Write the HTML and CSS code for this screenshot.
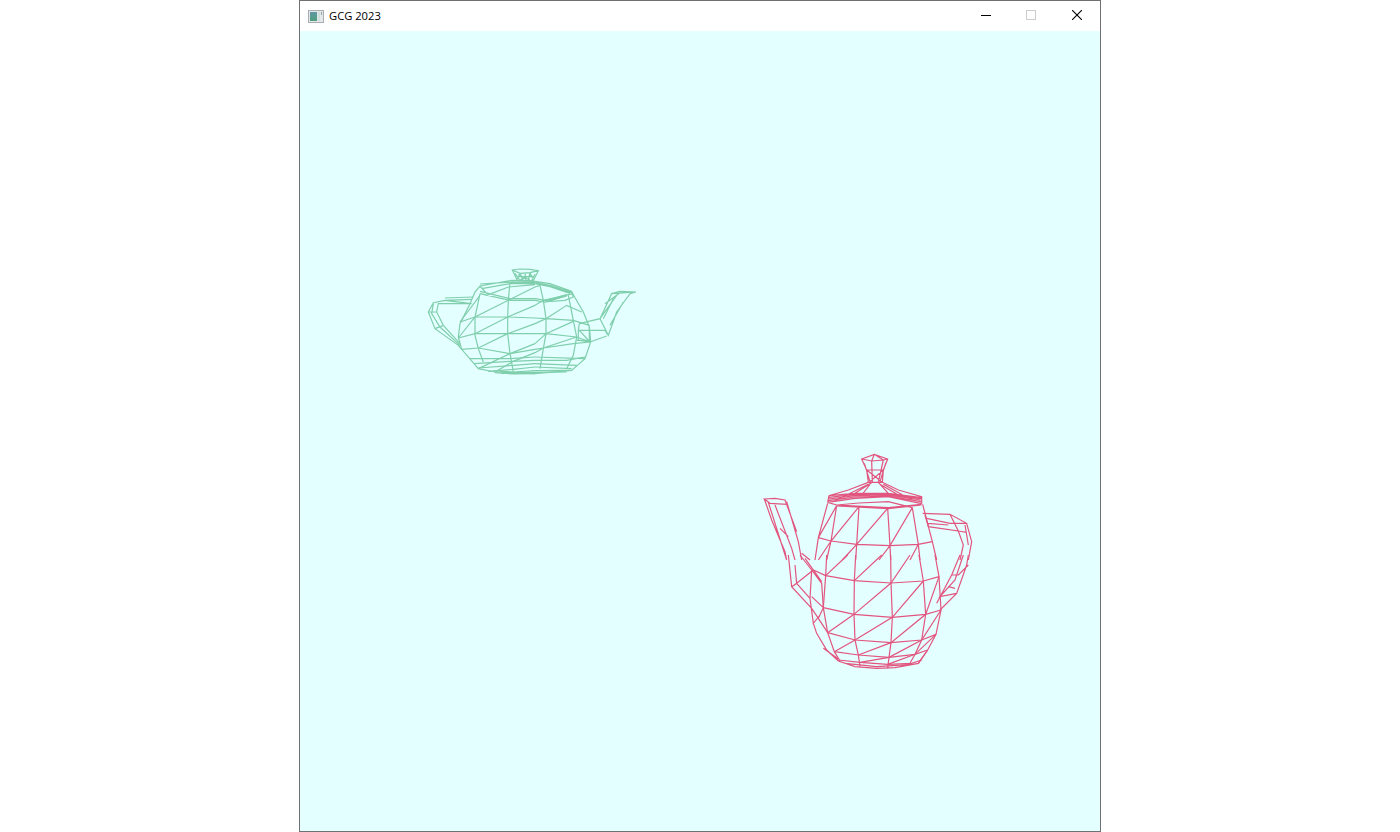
FILE: index.html
```html
<!DOCTYPE html>
<html lang="en">
<head>
    <meta charset="UTF-8">
    <title>GCG 2023</title>
    <link rel="stylesheet" href="styles.css">
</head>
<body>

    <div class="window">
        <div class="titlebar">
            <svg class="app-icon" width="16" height="13" viewBox="0 0 16 13">
                <defs>
                    <linearGradient id="iconFill" x1="0" y1="0" x2="0" y2="1">
                        <stop offset="0" stop-color="#5f97a5"/>
                        <stop offset="1" stop-color="#4f9f7c"/>
                    </linearGradient>
                </defs>
                <rect x="0.5" y="0.5" width="15" height="12" fill="#e4e8ea" stroke="#a8aeb4"/>
                <rect x="2" y="2" width="7" height="9" fill="url(#iconFill)"/>
                <rect x="10" y="2" width="2" height="9" fill="#cfe0dc"/>
                <rect x="13" y="2" width="1" height="3" fill="#8fa5a8"/>
            </svg>
            <span class="title">GCG 2023</span>
            <div class="controls">
                <div class="control control-min">
                    <svg width="10" height="10" viewBox="0 0 10 10"><path d="M0 5.5H10" stroke="#000" fill="none"/></svg>
                </div>
                <div class="control">
                    <svg width="10" height="10" viewBox="0 0 10 10"><rect x="0.5" y="0.5" width="9" height="9" stroke="#ccc" fill="none"/></svg>
                </div>
                <div class="control">
                    <svg width="10" height="10" viewBox="0 0 10 10"><path d="M0 0L10 10M10 0L0 10" stroke="#000" stroke-width="1.1" fill="none"/></svg>
                </div>
            </div>
        </div>

        <div class="canvas">
            <!-- coordinates are in 3x units -->
            <svg class="teapot teapot-green" width="225" height="120" viewBox="0 0 675 360">
                <!-- knob -->
                <path d="M277 30L300 27L330 28L355 32L340 62L292 62ZM277 30L300 40L330 38L355 32M285 40L300 62M300 40L310 62M315 40L318 62M330 38L325 62M345 42L335 62M300 40L292 58M330 38L340 58M290 50L340 50M295 45L330 60M335 45L300 60"/>

                <g transform="translate(15,6)">
                    <!-- rim, left -->
                    <path d="M150 90L165 72L260 55L330 58M165 66L260 60L330 62M165 72L185 95M165 95L255 115L330 115M165 88L255 110L330 110M185 100L250 75L330 68M170 80L260 64L330 65"/>
                    <!-- outline and columns -->
                    <path d="M150 90L135 125L105 185L100 225L110 262L160 320L210 330L330 335M165 95L150 165L150 220L160 260L175 300M255 60L250 115L248 165L248 215L255 275L265 330"/>
                    <!-- rows and diagonals -->
                    <path d="M105 180L150 165L248 165L330 168M100 228L150 215L248 215L330 215M110 262L160 258L255 275L330 262M105 180L165 100M100 228L150 165L250 115L330 75M150 215L248 165L330 130M110 262L160 258L248 215L330 185M160 320L255 275L330 245M210 330L265 298L330 272"/>
                    <!-- bottom bands -->
                    <path d="M135 290L255 290L330 285M148 305L260 298L330 295M160 318L265 310L330 305M190 328L265 322L330 315M210 332L265 336L330 335M205 326L265 330L330 326M230 334L330 331"/>
                    <!-- handle -->
                    <path d="M140 112L60 115L25 122L10 150L30 200L100 250L110 262M140 125L40 125L35 150L55 190L105 245M25 125L20 155L45 195L105 250M60 108L145 105M10 150L35 150M30 200L55 190M60 115L140 125"/>
                </g>

                <g transform="translate(330,6)">
                    <!-- rim, right -->
                    <path d="M15 58L60 65L125 88M15 62L60 70L125 92M15 65L60 74L120 94M125 88L130 105L105 115L40 120L15 115M15 110L50 116L110 98M40 122L110 102"/>
                    <!-- outline and columns -->
                    <path d="M125 90L160 150L178 195L182 240L165 290L125 325L15 335M30 70L40 115L48 170L48 215L40 260L30 320M115 100L130 175L140 225L130 280L110 320"/>
                    <!-- rows and diagonals -->
                    <path d="M15 168L48 170L130 175L178 190M15 215L48 215L140 225L180 240M15 262L40 258L130 245L180 240M15 185L48 170L110 130L155 150M15 130L40 115L130 95M15 75L30 70M15 245L48 215L130 178M15 272L40 258L140 225"/>
                    <!-- bottom bands -->
                    <path d="M15 285L165 290M15 295L110 295L165 285M15 305L140 310M15 315L125 320M15 326L125 325M15 331L110 330"/>
                    <!-- spout -->
                    <path d="M148 185L210 170L245 95L318 90M245 95L270 88L318 90M145 205L225 205L235 220L260 150L300 95L318 90M145 205L148 185M145 205L145 235L180 240M178 195L178 240M180 240L230 222M210 170L235 220M210 170L260 100M225 125L270 92M148 205L180 240M140 235L180 235M220 170L250 110M240 190L280 120"/>
                </g>
            </svg>

            <svg class="teapot teapot-pink" width="225" height="230" viewBox="0 0 675 690">
                <!-- knob -->
                <path d="M320 42L358 28L398 42L385 75L382 112L340 112L335 75ZM320 42L350 48L385 45L398 42M358 28L350 48L352 110M358 28L385 45L370 112M335 75L385 75M335 75L380 110M385 75L345 110M328 55L345 110M392 55L375 110"/>
                <!-- lid -->
                <path d="M340 112L280 135L222 152L218 172M382 112L430 135L500 155L500 176M222 152L300 145L400 145L500 158M222 157L300 148L400 148L498 161M222 162L300 152L400 150L497 165M220 167L300 156L400 153L498 170M218 172L300 160L400 155L500 176M218 172L245 180L400 188L500 178M245 183L400 191L500 180M245 180L312 174L400 170L472 188M352 112L300 145M370 112L400 145M340 118L245 165M385 118L470 165M345 118L320 150M375 118L430 150"/>
                <!-- body, upper half -->
                <path d="M218 175L190 278L180 345M245 182L228 288L215 345M312 185L305 298L302 345M398 190L405 302L407 345M472 188L490 298L495 345M503 178L532 290L545 345M245 182L190 278M312 185L228 288L190 345M398 190L305 298L262 345M472 188L405 302L372 345M532 290L490 298L465 345M190 278L228 288L305 298L405 302L490 298L532 290"/>
                <!-- spout -->
                <path d="M28 162L60 160L90 165L95 178L45 175ZM28 162L50 225L90 320L95 345M95 170L130 290L140 345M40 172L95 345M60 180L110 310L120 345M90 165L125 260M100 275L75 250M140 325L165 345"/>
                <!-- handle -->
                <path d="M503 205L585 208L635 235L650 290L640 345M510 210L520 245L610 258L625 300L615 345M515 220L585 235L635 235M585 208L610 258M518 235L580 240M630 240L640 300M610 258L635 262"/>

                <g transform="translate(0,330)">
                    <!-- body, lower half -->
                    <path d="M215 0L212 62L205 158L218 233L238 290L255 318M302 0L298 77L297 178L300 255L310 300L315 335M407 0L408 84L412 187L408 263L402 307L398 340M492 0L505 78L512 178L500 255L480 298L465 325M540 0L552 65L558 165L543 238L518 285L490 325"/>
                    <path d="M212 62L298 77L408 84L505 78L552 65M205 158L297 178L412 187L512 178L558 165M218 233L300 255L408 263L500 255L543 238M238 290L310 300L402 307L480 298L518 285M250 315L315 322L398 328L470 325L500 315"/>
                    <path d="M278 0L212 62M380 0L298 77M465 0L408 84L297 178L218 233M505 78L412 187L300 255L238 290M552 65L512 178L408 263L310 300M558 165L500 255L402 307L315 322M543 238L480 298L398 328"/>
                    <path d="M175 205L185 235L215 285L250 318L300 335L365 340L420 338L490 325L518 285M270 325L365 335L470 328M190 190L218 233M205 280L250 312"/>
                    <!-- spout, lower part -->
                    <path d="M100 0L110 95L170 160L190 190L205 158M125 85L175 45L212 62M135 0L170 45L200 85L205 158M165 130L175 205L195 180M110 95L125 85L120 30M125 85L165 130M150 10L200 80M170 45L165 130M170 125L205 158"/>
                    <!-- handle, lower part -->
                    <path d="M640 0L635 30L605 115L555 165M615 0L590 60L545 145M625 0L600 75L555 125L605 115M580 95L600 100M640 30L610 60L590 60"/>
                </g>
            </svg>
        </div>
    </div>

</body>
</html>
```

FILE: styles.css
```css
body {
    margin: 0;
    background-color: #fff;
    display: flex;
    justify-content: center;
}

.window {
    width: 800px;
    border: 1px solid #707070;
    font-family: "Open Sans", Arial, sans-serif;
}

.titlebar {
    height: 30px;
    display: flex;
    align-items: center;
    background-color: #fff;
}

.app-icon {
    margin-left: 8px;
}

.title {
    margin-left: 5px;
    margin-bottom: 2px;
    font-size: 11.2px;
    color: #000;
}

.controls {
    margin-left: auto;
    display: flex;
}

.control {
    box-sizing: border-box;
    width: 46px;
    height: 30px;
    padding-bottom: 2px;
    display: flex;
    align-items: center;
    justify-content: center;
}

.control-min {
    padding-left: 2px;
}

.canvas {
    position: relative;
    height: 800px;
    background-color: #e4ffff;
}

/* teapots sit on a free canvas, their position is the content */
.teapot {
    position: absolute;
    fill: none;
    stroke-width: 3.6;
}

.teapot-green {
    left: 120px;
    top: 229px;
    stroke: #7fceac;
}

.teapot-pink {
    left: 455px;
    top: 414px;
    stroke: #e2557f;
}
```
